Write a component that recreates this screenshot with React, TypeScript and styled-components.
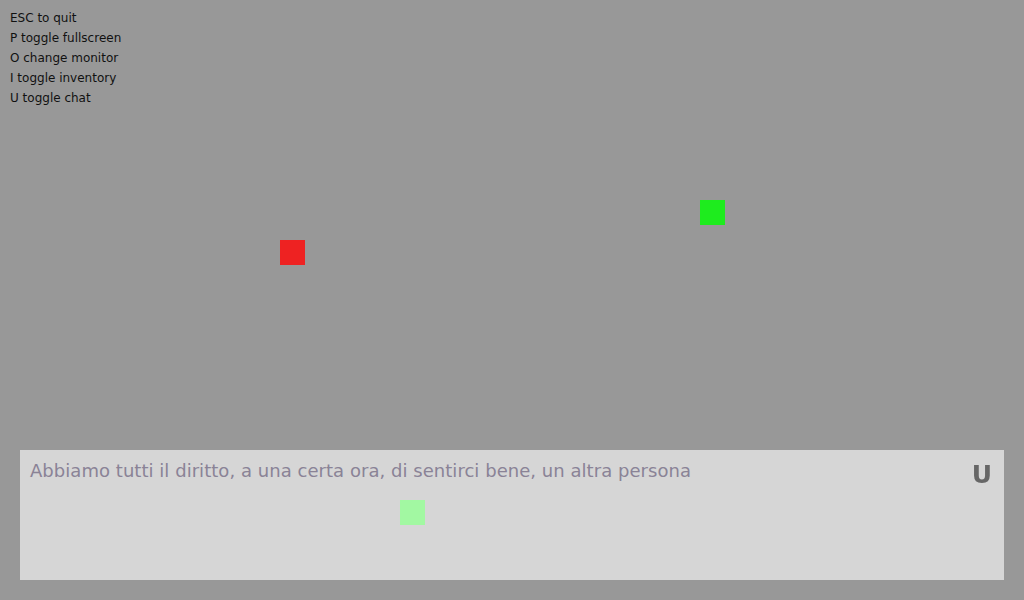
import React from "react";
import styled, { createGlobalStyle } from "styled-components";

const Global = createGlobalStyle`
  html, body { margin: 0; padding: 0; }
  body { background: #989898; font-family: "DejaVu Sans", sans-serif; overflow: hidden; }
`;

const Screen = styled.div`
  position: relative;
  width: 1024px;
  height: 600px;
  background: #989898;
  display: flex;
  flex-direction: column;
  justify-content: space-between;
`;

const Help = styled.ul`
  list-style: none;
  margin: 0;
  padding: 8px 10px 0;
  display: flex;
  flex-direction: column;
`;

const HelpLine = styled.li`
  font-size: 12px;
  line-height: 20px;
  color: #111;
`;

const Entity = styled.div<{ $color: string }>`
  position: absolute;
  width: 25px;
  height: 25px;
  background: ${(p) => p.$color};
`;

const Chat = styled.div`
  margin: 0 20px 20px;
  height: 130px;
  background: #d6d6d6;
  display: flex;
  justify-content: space-between;
  align-items: flex-start;
  padding: 10px 12px 0 10px;
  box-sizing: border-box;
`;

const Message = styled.div`
  font-size: 18px;
  line-height: 22px;
  letter-spacing: 0.04px;
  color: #8a8396;
`;

const Key = styled.div`
  font-size: 25px;
  font-weight: bold;
  line-height: 30px;
  color: #666;
  filter: blur(0.3px);
`;

const entities = [
  { x: 280, y: 240, c: "#ee2222" },
  { x: 700, y: 200, c: "#1eec1e" },
  { x: 400, y: 500, c: "#a2f8a2" },
];

export default function App() {
  return (
    <>
      <Global />
      <Screen>
        <Help>
          <HelpLine>ESC to quit</HelpLine>
          <HelpLine>P toggle fullscreen</HelpLine>
          <HelpLine>O change monitor</HelpLine>
          <HelpLine>I toggle inventory</HelpLine>
          <HelpLine>U toggle chat</HelpLine>
        </Help>
        <Chat>
          <Message>Abbiamo tutti il diritto, a una certa ora, di sentirci bene, un altra persona</Message>
          <Key>U</Key>
        </Chat>
        {entities.map((e, i) => (
          <Entity key={i} $color={e.c} style={{ left: e.x, top: e.y }} />
        ))}
      </Screen>
    </>
  );
}
